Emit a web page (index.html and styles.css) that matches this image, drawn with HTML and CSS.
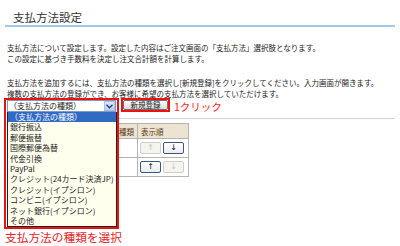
FILE: index.html
```html
<!DOCTYPE html>
<html lang="ja">
<head>
    <meta charset="UTF-8">
    <title>支払方法設定</title>
    <link rel="stylesheet" href="styles.css">
</head>
<body>
    <div class="page">
        <h1 class="page-title">支払方法設定</h1>
        <p class="lead">支払方法について設定します。設定した内容はご注文画面の「支払方法」選択肢となります。<br>この設定に基づき手数料を決定し注文合計額を計算します。</p>
        <p class="lead lead-second">支払方法を追加するには、支払方法の種類を選択し[新規登録]をクリックしてください。入力画面が開きます。<br>複数の支払方法の登録ができ、お客様に希望の支払方法を選択していただけます。</p>

        <div class="add-row">
            <div class="picker">
                <div class="picker-frame">
                    <div class="select-box">
                        <span class="select-value">（支払方法の種類）</span>
                        <span class="select-arrow">
                            <svg width="7" height="5" viewBox="0 0 7 5"><path d="M0.5 0.8 L3.5 3.8 L6.5 0.8" fill="none" stroke="#1c3f86" stroke-width="1.3"/></svg>
                        </span>
                    </div>
                    <ul class="option-list">
                        <li class="selected">（支払方法の種類）</li>
                        <li>銀行振込</li>
                        <li>郵便振替</li>
                        <li>国際郵便為替</li>
                        <li>代金引換</li>
                        <li>PayPal</li>
                        <li>クレジット(24カード決済JP)</li>
                        <li>クレジット(イプシロン)</li>
                        <li>コンビニ(イプシロン)</li>
                        <li>ネット銀行(イプシロン)</li>
                        <li>その他</li>
                    </ul>
                </div>
                <div class="picker-note">支払方法の種類を選択</div>
            </div>
            <div class="btn-frame"><button class="btn-add">新規登録</button></div>
            <span class="step-note">1クリック</span>
        </div>

        <div class="rule"></div>

        <!-- left column sits under the open dropdown -->
        <table class="method-table">
            <tr>
                <th class="col-kind">種類</th>
                <th class="col-order">表示順</th>
            </tr>
            <tr>
                <td></td>
                <td class="order-cell"><button class="move-btn" disabled>↑</button><button class="move-btn">↓</button></td>
            </tr>
            <tr>
                <td></td>
                <td class="order-cell"><button class="move-btn">↑</button><button class="move-btn" disabled>↓</button></td>
            </tr>
        </table>
    </div>
</body>
</html>
```

FILE: styles.css
```css
/* General styles */
html, body {
    min-height: 246px;
}

body {
    margin: 0;
    padding: 0;
    background: #fff;
    color: #222;
    font-family: "Noto Sans CJK JP", "Liberation Sans", sans-serif;
}

.page {
    min-height: 246px;
    padding: 0 5px;
}

.page-title {
    margin: 0;
    padding: 9px 0 0 8px;
    font-size: 11.5px;
    line-height: 16px;
    font-weight: normal;
    color: #333;
    border-bottom: 2px solid #9fc7ea;
}

.lead {
    margin: 15px 0 0 2px;
    font-size: 7.5px;
    line-height: 11px;
    white-space: nowrap;
}

.lead-second {
    margin-top: 13px;
}

/* Select + button row */
.add-row {
    display: flex;
    align-items: flex-start;
    margin: -1px 0 0 -1px;
}

.picker {
    position: relative;
    width: 115px;
    height: 14px;
}

.picker-frame {
    position: absolute;
    top: 0;
    left: 0;
    z-index: 2;
    width: 115px;
    box-sizing: border-box;
    border: 2px solid #ee1111;
    padding-left: 1px;
    background: #fff;
}

.select-box {
    display: flex;
    align-items: center;
    justify-content: space-between;
    width: 109px;
    height: 12px;
    box-sizing: border-box;
    border: 1px solid #7f9db9;
    background: #fff;
    font-size: 8px;
    line-height: 10px;
}

.select-value {
    padding-left: 1px;
}

.select-arrow {
    display: flex;
    align-items: center;
    justify-content: center;
    width: 11px;
    height: 10px;
    box-sizing: border-box;
    border: 1px solid #a9bfe6;
    background: linear-gradient(#dfe8fa, #b9cdf1);
}

.option-list {
    margin: 0;
    padding: 0;
    list-style: none;
    width: 110px;
    box-sizing: border-box;
    border: 1px solid #222;
    border-top: none;
    background: #ffffee;
    font-size: 8px;
}

.option-list li {
    height: 10.4px;
    line-height: 10.4px;
    padding-left: 2px;
    white-space: nowrap;
    overflow: hidden;
}

.option-list li.selected {
    background: #316ac5;
    color: #fff;
}

.picker-note {
    position: absolute;
    top: 133px;
    left: 1px;
    font-size: 11.7px;
    line-height: 12px;
    color: #ee1c1c;
    white-space: nowrap;
}

.btn-frame {
    margin-left: 2px;
    width: 49px;
    height: 14px;
    box-sizing: border-box;
    border: 2px solid #ee1111;
}

.btn-add {
    display: block;
    width: 45px;
    height: 10px;
    padding: 0;
    border: 1px solid #6f6f6f;
    border-radius: 2px;
    background: linear-gradient(#fdfdfd, #dadada);
    color: #222;
    font-family: inherit;
    font-size: 7.5px;
    line-height: 8px;
}

.step-note {
    margin: 3px 0 0 4px;
    font-size: 10.5px;
    line-height: 11px;
    color: #ff1a1a;
}

.rule {
    margin-top: 6px;
    height: 1px;
    background: #d4d4d4;
}

/* Payment method table */
.method-table {
    margin: 4px 0 0 2px;
    border-collapse: collapse;
    border: 1px solid #a8a8a8;
    font-size: 7.5px;
}

.method-table th,
.method-table td {
    border: 1px solid #b4b4b4;
    padding: 0;
}

.method-table th {
    height: 14px;
    background: #ede3d1;
    color: #5a3a1a;
    font-weight: normal;
    text-align: left;
}

.method-table td {
    height: 18px;
}

.col-kind {
    width: 126px;
    padding-right: 3px !important;
    text-align: right !important;
}

.col-order {
    width: 47px;
    padding-left: 3px !important;
}

.order-cell {
    padding: 0 2px !important;
    white-space: nowrap;
}

.move-btn {
    width: 21px;
    height: 12px;
    margin-right: 2px;
    padding: 0;
    border: 1px solid #3d5a7c;
    border-radius: 2px;
    background: linear-gradient(#ffffff, #e8ecf2);
    color: #111;
    font-family: "DejaVu Sans", sans-serif;
    font-size: 8px;
    line-height: 10px;
    vertical-align: middle;
}

.move-btn:disabled {
    border-color: #cfcfc8;
    background: #f5f4ee;
    color: #c4c4bc;
}
```
